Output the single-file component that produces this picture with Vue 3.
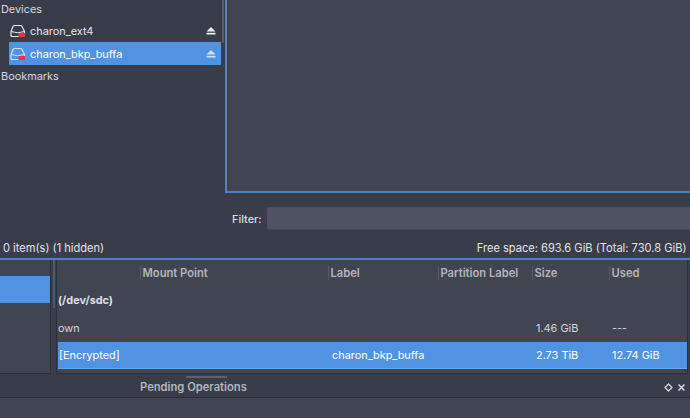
<script setup>
const rows = [
  { id: 1, name: 'charon_ext4', sel: false },
  { id: 2, name: 'charon_bkp_buffa', sel: true }
]
const headers = [
  { t: 'Mount Point', w: 188 },
  { t: 'Label', w: 110 },
  { t: 'Partition Label', w: 94 },
  { t: 'Size', w: 77 },
  { t: 'Used', w: 80 }
]
</script>

<template>
  <div class="app">
    <section class="top">
      <aside class="side">
        <div class="group first">Devices</div>
        <div v-for="r in rows" :key="r.id" class="place" :class="{ sel: r.sel }">
          <svg class="drive" width="18" height="16" viewBox="0 0 18 16">
            <path d="M5.500 2.500h6q1 0 1.500 1l2.500 5v4q0 1-1 1H3q-1 0-1-1v-4l2-5q.5-1 1.500-1z" fill="none" stroke="currentColor" stroke-width="1.200" />
            <path d="M2 8.500q6.500 2.500 13.500 0" fill="none" stroke="currentColor" stroke-width="1" />
            <rect x="9.500" y="10" width="6.500" height="4" fill="#e8333a" />
          </svg>
          <span class="pname">{{ r.name }}</span>
          <svg class="eject" width="10" height="8" viewBox="0 0 10 8">
            <path d="M5 0l4.500 4.500H.5z" fill="currentColor" />
            <rect x=".5" y="5.800" width="9" height="1.700" fill="currentColor" />
          </svg>
        </div>
        <div class="group book">Bookmarks</div>
      </aside>
      <div class="scroll"><div class="thumb"></div></div>
      <div class="main">
        <div class="view"></div>
        <div class="filter">
          <label class="flabel">Filter:</label>
          <div class="finput"></div>
        </div>
      </div>
    </section>
    <div class="status">
      <span>0 item(s) (1 hidden)</span>
      <span>Free space: 693.6 GiB (Total: 730.8 GiB)</span>
    </div>
    <section class="parts">
      <div class="disks"><div class="disk"></div></div>
      <div class="split"><div class="sthumb"></div></div>
      <div class="table">
        <div class="thead">
          <div class="lead"></div>
          <div v-for="h in headers" :key="h.t" class="th" :style="{ width: h.w + 'px' }">{{ h.t }}</div>
        </div>
        <div class="tr dev">(/dev/sdc)</div>
        <div class="tr cells">
          <span class="c1">own</span><span class="c2"></span><span class="c3">1.46 GiB</span><span class="c4">---</span>
        </div>
        <div class="tr cells selrow">
          <span class="c1">[Encrypted]</span><span class="c2">charon_bkp_buffa</span><span class="c3">2.73 TiB</span><span class="c4">12.74 GiB</span>
        </div>
      </div>
    </section>
    <header class="dock">
      <span class="dtitle">Pending Operations</span>
      <div class="dbtns">
        <svg width="9" height="9" viewBox="0 0 9 9"><path d="M4.500 1L8 4.500 4.500 8 1 4.500z" fill="none" stroke="#d5d7dc" stroke-width="1.300" /></svg>
        <svg width="9" height="9" viewBox="0 0 9 9"><path d="M1.500 1.500l6 6M7.500 1.500l-6 6" fill="none" stroke="#d5d7dc" stroke-width="1.600" /></svg>
      </div>
    </header>
    <div class="dockbody"></div>
  </div>
</template>

<style>
html, body { margin: 0; background: #393c49; }
</style>

<style scoped>
.app {
  width: 690px;
  height: 418px;
  overflow: hidden;
  display: flex;
  flex-direction: column;
  background: #393c49;
  color: #e4e5e8;
  font: 10.900px/14px Inter, "Noto Sans", sans-serif;
}
.top { display: flex; height: 238px; flex: none; }
.side { width: 222px; flex: none; box-sizing: border-box; padding-top: 2px; }
.group { height: 14px; padding-left: 1px; color: #d8dae0; }
.first { margin-bottom: 4px; }
.book { margin-top: 4px; }
.place {
  display: flex;
  align-items: center;
  height: 22px;
  margin: 0 1px 0 9px;
  padding: 0 5px 0 0;
  gap: 3px;
  color: #e6e7ea;
}
.place.sel { background: #5193e3; color: #fff; height: 23px; }
.drive { flex: none; }
.pname { flex: 1; }
.eject { flex: none; color: #eceded; }
.sel .drive, .sel .eject { color: #cfdff5; }
.scroll { width: 3px; flex: none; }
.thumb { width: 2px; height: 43px; background: #595d69; }
.main { flex: 1; display: flex; flex-direction: column; }
.view {
  height: 191px;
  background: #414551;
  border-left: 2px solid #4a83c8;
  border-bottom: 2px solid #4a83c8;
}
.filter {
  display: flex;
  align-items: center;
  margin-top: 14px;
  height: 23px;
  gap: 5px;
  padding-left: 7px;
}
.flabel { font-weight: 500; color: #dcdde2; }
.finput {
  flex: 1;
  height: 23px;
  box-sizing: border-box;
  background: #4f5361;
  border-radius: 2px 0 0 2px;
  border-bottom: 1px solid #444856;
}
.status {
  display: flex;
  justify-content: space-between;
  height: 22px;
  line-height: 20px;
  padding: 0 3.500px 0 3px;
  flex: none;
  color: #e4e5e8;
  font-size: 11.100px;
  border-bottom: 2px solid #4a83c8;
  box-sizing: border-box;
}
.parts { display: flex; height: 114px; flex: none; }
.disks {
  width: 51px;
  flex: none;
  background: #414551;
  padding-top: 16px;
  box-sizing: border-box;
  border-bottom: 1px solid #2d303b;
  border-right: 1px solid #2d303b;
}
.disk { height: 27px; background: #5193e3; }
.split { width: 5px; flex: none; padding-left: 2px; box-sizing: border-box; }
.sthumb { width: 2px; height: 48px; background: #565a66; }
.table {
  flex: 1;
  background: #414551;
  border-left: 1px solid #2d303b;
  border-right: 1px solid #2d303b;
  border-bottom: 1px solid #2d303b;
  margin-right: 2px;
  padding-left: 1px;
  min-width: 0;
}
.thead { display: flex; height: 26px; align-items: center; font-weight: 600; color: #b4b6bc; font-size: 11.200px; }
.lead { width: 82px; flex: none; }
.th {
  flex: none;
  box-sizing: border-box;
  padding-left: 1.500px;
  border-left: 1px solid #565a66;
  height: 14px;
  white-space: nowrap;
}
.tr { height: 28px; line-height: 28px; }
.dev { font-weight: 700; color: #dfe0e4; }
.cells { display: flex; color: #d5d6da; }
.c1 { width: 274px; flex: none; }
.c2 { width: 204px; flex: none; }
.c3 { width: 76px; flex: none; }
.selrow { background: #5193e3; color: #fff; height: 27px; line-height: 27px; border-bottom: 1px solid #6aa6ec; box-sizing: border-box; }
.selrow .c1 { padding-left: 1px; box-sizing: border-box; }
.dock {
  height: 24px;
  flex: none;
  position: relative;
  border-bottom: 1px solid #2d303b;
  box-sizing: border-box;
}
.dock::before {
  content: "";
  position: absolute;
  left: 186px;
  top: 2px;
  width: 41px;
  height: 2px;
  background: #5d616d;
}
.dtitle { font-weight: 600; color: #b4b6bc; font-size: 11.200px; position: absolute; left: 140px; top: 6px; }
.dbtns { position: absolute; right: 4px; top: 9px; display: flex; gap: 4px; }
.dbtns svg { display: block; }
.dockbody { flex: 1; background: #414551; }
</style>
